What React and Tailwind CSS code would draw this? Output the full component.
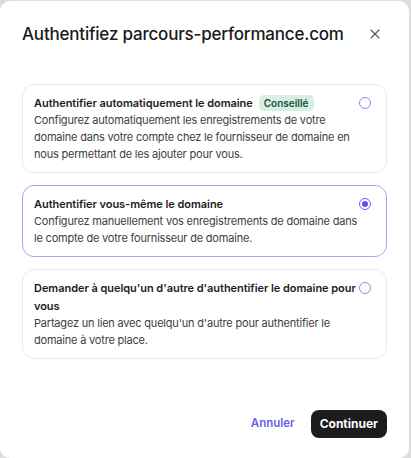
import React, { useState } from "react";
import { X } from "lucide-react";

const options = [
  {
    id: "auto",
    title: "Authentifier automatiquement le domaine",
    badge: "Conseillé",
    text: "Configurez automatiquement les enregistrements de votre domaine dans votre compte chez le fournisseur de domaine en nous permettant de les ajouter pour vous.",
  },
  {
    id: "manual",
    title: "Authentifier vous-même le domaine",
    text: "Configurez manuellement vos enregistrements de domaine dans le compte de votre fournisseur de domaine.",
  },
  {
    id: "share",
    title: "Demander à quelqu'un d'autre d'authentifier le domaine pour vous",
    text: "Partagez un lien avec quelqu'un d'autre pour authentifier le domaine à votre place.",
  },
];

const Radio = ({ checked }) => (
  <span
    className={`mt-[3px] flex h-[12px] w-[12px] shrink-0 items-center justify-center rounded-full border ${
      checked ? "border-[#6b61ee]" : "border-[#8f88f3]"
    }`}
  >
    {checked && <span className="h-[6px] w-[6px] rounded-full bg-[#5e52ea]" />}
  </span>
);

const OptionCard = ({ option, selected, onSelect }) => (
  <div
    onClick={onSelect}
    className={`cursor-pointer rounded-[12px] border bg-white pl-[11px] pr-[15px] py-[9px] ${
      selected ? "border-[#a9a3f5]" : "border-[#e8e8e8]"
    }`}
  >
    <div className="flex items-start">
      <div className="flex-1">
        <div className="text-[11px] font-semibold leading-[18px] tracking-[-0.05px] text-[#1d1d1d]">
          {option.title}
          {option.badge && (
            <span className="ml-[6px] rounded-[5px] bg-[#d7f0e4] px-[5px] py-[2px] text-[10px] font-semibold tracking-normal text-[#1e4d3c]">
              {option.badge}
            </span>
          )}
        </div>
        <p className="text-[11px] leading-[17px] tracking-[-0.2px] text-[#404040]">{option.text}</p>
      </div>
      <Radio checked={selected} />
    </div>
  </div>
);

export default function App() {
  const [selected, setSelected] = useState("manual");

  return (
    <div
      className="flex h-[458px] w-[411px] items-start bg-[#dcdddc] pt-[1px]"
      style={{ fontFamily: "Inter, 'Noto Sans', sans-serif" }}
    >
      <div className="flex h-[457px] w-[409px] flex-col rounded-[10px] bg-white px-[22px]">
        <div className="flex items-center justify-between pt-[22px]">
          <h1 className="text-[17px] font-medium leading-[22px] tracking-[-0.2px] text-[#1a1a1a]">
            Authentifiez parcours-performance.com
          </h1>
          <button type="button" className="mr-[4px] text-[#555]">
            <X size={16} strokeWidth={1.6} />
          </button>
        </div>

        <div className="mt-[39px] flex flex-col gap-[12px]">
          {options.map((option) => (
            <OptionCard
              key={option.id}
              option={option}
              selected={selected === option.id}
              onSelect={() => setSelected(option.id)}
            />
          ))}
        </div>

        <div className="mt-auto mb-[20px] flex items-center justify-end gap-[16px]">
          <button type="button" className="text-[11.5px] font-semibold text-[#6a5ef0]">
            Annuler
          </button>
          <button
            type="button"
            className="h-[28px] rounded-[8px] bg-[#1c1c1c] px-[9px] text-[12px] font-bold text-white"
          >
            Continuer
          </button>
        </div>
      </div>
    </div>
  );
}
